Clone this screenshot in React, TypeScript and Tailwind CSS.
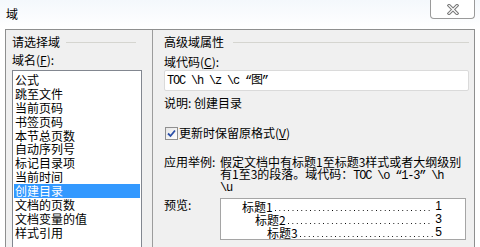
const cjk = "font-['Noto_Sans_CJK_SC','Noto_Sans',sans-serif]";
const mono = "font-['Liberation_Mono','Noto_Sans_CJK_SC',monospace] tracking-[-1.2px]";

const fields = [
  "公式",
  "跳至文件",
  "当前页码",
  "书签页码",
  "本节总页数",
  "自动序列号",
  "标记目录项",
  "当前时间",
  "创建目录",
  "文档的页数",
  "文档变量的值",
  "样式引用",
];

function CloseIcon() {
  return (
    <svg width="12" height="11" viewBox="0 0 12 11">
      <path d="M2 1.5 L10 9.5 M10 1.5 L2 9.5" stroke="#7a7a7a" strokeWidth="3.2" strokeLinecap="square" />
      <path d="M2 1.5 L10 9.5 M10 1.5 L2 9.5" stroke="#ffffff" strokeWidth="1.2" strokeLinecap="square" />
    </svg>
  );
}

function CheckBox() {
  return (
    <div className="w-[13px] h-[13px] border border-[#8f8f8f] bg-gradient-to-br from-[#e6e6e6] to-white flex items-center justify-center">
      <svg width="9" height="9" viewBox="0 0 9 9">
        <path d="M1 4.5 L3.5 7 L8 1.5" stroke="#2a4fa8" strokeWidth="1.8" fill="none" />
      </svg>
    </div>
  );
}

// dotted leader drawn as a background so it never spills as text
function PreviewRow({ indent, label, page }: { indent: string; label: string; page: string }) {
  return (
    <div className={`flex items-end h-[13px] leading-[13px] ${indent}`}>
      <span className={`${cjk} text-[12px] text-black whitespace-nowrap shrink-0`}>{label}</span>
      <div className="flex-1 min-w-0 h-px mb-[2px] ml-[2px] bg-[linear-gradient(to_right,#000_1px,transparent_1px)] bg-[length:4.4px_1px] bg-repeat-x" />
      <span className="shrink-0 font-['Liberation_Sans',sans-serif] text-[12px] text-black pl-[2px]">{page}</span>
    </div>
  );
}

export default function App() {
  return (
    <div className={`w-[480px] h-[247px] overflow-hidden bg-white flex flex-col ${cjk} text-[12px] text-black`}>
      {/* title bar */}
      <div className="h-[29px] flex items-start shrink-0 bg-gradient-to-b from-[#f4f8fc] to-white">
        <span className="ml-[6px] mt-[7px] text-[12px] leading-[14px]">域</span>
        <div className="ml-auto mr-[5px] w-[45px] h-[19px] border border-t-0 border-[#9a9a9a] rounded-b-[4px] bg-white flex items-center justify-center">
          <CloseIcon />
        </div>
      </div>

      {/* dialog body */}
      <div className="ml-[5px] w-[470px] flex-1 flex border-t border-l border-r border-[#8e8f8f] bg-[#f0f0f0]">
        {/* left column */}
        <div className="w-[147px] shrink-0 border-r border-[#9c9c9c] pl-[6px] pr-[10px] pt-[5px] flex flex-col">
          <div className="flex items-center h-[14px]">
            <span className="leading-[14px] whitespace-nowrap">请选择域</span>
            <div className="flex-1 h-px bg-[#d5d5d0] ml-[6px] mr-[6px]" />
          </div>
          <div className="mt-[4px] h-[14px] leading-[14px] whitespace-nowrap">
            域名(<span className="underline">F</span>):
          </div>
          <div className="mt-[3px] w-[130px] h-[200px] border border-[#828790] bg-white pt-[2px] px-[1px]">
            {fields.map((f) => (
              <div
                key={f}
                className={`h-[13.9px] leading-[13.9px] pl-[1px] whitespace-nowrap ${
                  f === "创建目录" ? "bg-[#3399ff] text-white" : "text-black"
                }`}
              >
                {f}
              </div>
            ))}
          </div>
        </div>

        {/* right column */}
        <div className="flex-1 min-w-0 pl-[11px] pr-[5px] pt-[5px] flex flex-col">
          <div className="flex items-center h-[14px]">
            <span className="leading-[14px] whitespace-nowrap">高级域属性</span>
            <div className="flex-1 h-px bg-[#d5d5d0] ml-[9px]" />
          </div>
          <div className="mt-[6px] h-[14px] leading-[14px] whitespace-nowrap">
            域代码(<span className="underline">C</span>):
          </div>
          <div className="mt-[1px] h-[21px] border border-[#dadada] rounded-[2px] bg-white flex items-center pl-[2px]">
            <span className={`${mono} text-[12px] leading-[14px] whitespace-nowrap`}>TOC \h \z \c “图”</span>
          </div>
          <div className="mt-[5px] h-[14px] leading-[14px] whitespace-nowrap">说明: 创建目录</div>

          <div className="mt-[16px] flex items-center h-[14px] ml-[1px] gap-[1px]">
            <CheckBox />
            <span className="leading-[14px] whitespace-nowrap">
              更新时保留原格式(<span className="underline">V</span>)
            </span>
          </div>

          <div className="mt-[16px] flex items-start">
            <span className="w-[56px] shrink-0 leading-[12px] whitespace-nowrap">应用举例:</span>
            <div className="leading-[12px] whitespace-nowrap">
              <div>假定文档中有标题1至标题3样式或者大纲级别</div>
              <div>
                有1至3的段落。域代码：<span className={`${mono} text-[12px]`}>TOC \o “1-3” \h</span>
              </div>
              <div className={`${mono} text-[12px]`}>\u</div>
            </div>
          </div>

          <div className="mt-[4px] flex items-start">
            <span className="w-[56px] shrink-0 leading-[13px] whitespace-nowrap">预览:</span>
            <div className="w-[246px] h-[42px] border border-[#a5a5a5] bg-white pr-[23px] pt-[1px]">
              <PreviewRow indent="pl-[21px]" label="标题1" page="1" />
              <PreviewRow indent="pl-[34px]" label="标题2" page="3" />
              <PreviewRow indent="pl-[46px]" label="标题3" page="5" />
            </div>
          </div>
        </div>
      </div>
    </div>
  );
}
